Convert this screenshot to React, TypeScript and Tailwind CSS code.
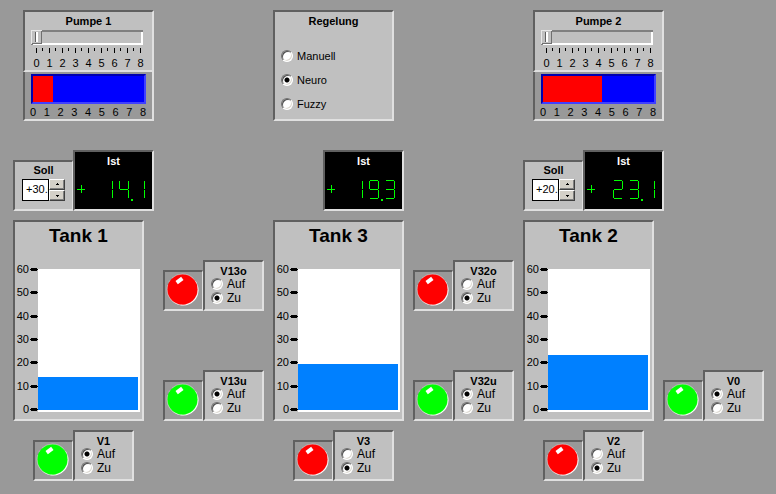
import type { ReactNode } from "react";

const BEVEL =
  "border-2 border-t-[#606060] border-l-[#606060] border-r-[#e0e0e0] border-b-[#e0e0e0]";

const SCALE = [0, 1, 2, 3, 4, 5, 6, 7, 8];
const LEVELS = [60, 50, 40, 30, 20, 10, 0];

function Title({ id, children }: { id?: string; children: ReactNode }) {
  return (
    <h2 id={id} className="text-center text-[11px] leading-[18px] font-bold">
      {children}
    </h2>
  );
}

function Pump({ name, flow }: { name: string; flow: number }) {
  const id = name.replace(" ", "-").toLowerCase();
  return (
    <section className="w-[131px]">
      <div className={`h-[62px] bg-[#c0c0c0] ${BEVEL}`}>
        <label htmlFor={id} className="block text-center text-[11px] leading-[18px] font-bold">
          {name}
        </label>
        <input
          id={id}
          type="range"
          min={0}
          max={8}
          step={0.1}
          defaultValue={0}
          className="ml-[6px] block h-[15px] w-[112px] appearance-none bg-[#c0c0c0] shadow-[inset_2px_2px_0_#808080,inset_-2px_-2px_0_#ffffff] [&::-webkit-slider-thumb]:h-[14px] [&::-webkit-slider-thumb]:w-[11px] [&::-webkit-slider-thumb]:-mt-px [&::-webkit-slider-thumb]:appearance-none [&::-webkit-slider-thumb]:bg-[#c0c0c0] [&::-webkit-slider-thumb]:bg-[linear-gradient(90deg,transparent_4px,#606060_4px,#606060_5px,#ffffff_5px,#ffffff_7px,transparent_7px)] [&::-webkit-slider-thumb]:bg-[size:11px_10px] [&::-webkit-slider-thumb]:bg-center [&::-webkit-slider-thumb]:bg-no-repeat [&::-webkit-slider-thumb]:shadow-[inset_1px_1px_0_#e8e8e8,inset_-1px_-1px_0_#707070]"
        />
        <svg className="mt-[3px] ml-[6px] block h-[6px] w-[112px]" shapeRendering="crispEdges" aria-hidden="true">
          {SCALE.map((n) => (
            <rect key={n} x={5 + n * 13} y={0} width={1} height={5} />
          ))}
          {SCALE.slice(0, 8).map((n) => (
            <rect key={n} x={11 + n * 13} y={0} width={1} height={3} />
          ))}
        </svg>
        <div className="mt-[3px] ml-[5px] flex w-[117px] text-center text-[11px] leading-[12px]">
          {SCALE.map((n) => (
            <span key={n} className="flex-1">{n}</span>
          ))}
        </div>
      </div>
      <div className="h-[49px] border-2 border-t-0 border-l-[#606060] border-r-[#e0e0e0] border-b-[#e0e0e0] pt-[2px]">
        <div className="ml-[6px] h-[30px] w-[115px] border-2 border-t-[#0000b0] border-l-[#0000b0] border-r-[#4040ff] border-b-[#4040ff] bg-[#0000ff]">
          <div className="h-full bg-[#ff0000]" style={{ width: `${(flow / 8) * 100}%` }} />
        </div>
        <div className="mt-[2px] ml-[2px] flex w-[122px] justify-between text-center text-[11px] leading-[12px]">
          {SCALE.map((n) => (
            <span key={n} className="w-[12px]">{n}</span>
          ))}
        </div>
      </div>
    </section>
  );
}

function Radio({ group, label, checked }: { group: string; label: string; checked: boolean }) {
  return (
    <label className="flex items-center gap-[4px]">
      <input
        type="radio"
        name={group}
        defaultChecked={checked}
        className="size-[12px] appearance-none rounded-full border border-t-[#707070] border-l-[#707070] border-r-white border-b-white bg-white shadow-[inset_1px_1px_0_#505050,inset_-1px_-1px_0_#dcd8d0] checked:bg-[radial-gradient(circle,#000_2px,#fff_3px)]"
      />
      {label}
    </label>
  );
}

function Control() {
  const modes = ["Manuell", "Neuro", "Fuzzy"];
  return (
    <section role="radiogroup" aria-labelledby="regelung" className={`h-[111px] w-[121px] bg-[#c0c0c0] ${BEVEL}`}>
      <Title id="regelung">Regelung</Title>
      <div className="mt-[14px] ml-[6px] flex flex-col text-[11px] leading-[24px]">
        {modes.map((m) => (
          <Radio key={m} group="mode" label={m} checked={m === "Neuro"} />
        ))}
      </div>
    </section>
  );
}

/* Lit segments per digit: a top, b/c right, d bottom, e/f left, g middle */
const SEGMENTS: Record<string, string> = {
  "0": "abcdef",
  "1": "bc",
  "2": "abged",
  "3": "abgcd",
  "4": "fgbc",
  "5": "afgcd",
  "6": "afgecd",
  "7": "abc",
  "8": "abcdefg",
  "9": "abcdfg",
};

const SEGMENT_BOX: Record<string, [number, number, number, number]> = {
  a: [1, 0, 8, 1],
  b: [9, 1, 1, 8],
  c: [9, 10, 1, 8],
  d: [1, 18, 8, 1],
  e: [0, 10, 1, 8],
  f: [0, 1, 1, 8],
  g: [1, 9, 8, 1],
};

function Actual({ value }: { value: string }) {
  const digits = value.replace(".", "").split("");
  return (
    <section className={`h-[61px] w-[81px] bg-black ${BEVEL}`}>
      <h2 className="text-center text-[11px] leading-[18px] font-bold text-white">Ist</h2>
      <svg
        className="mt-[10px] block h-[24px] w-full"
        viewBox="0 0 77 24"
        fill="#00ff00"
        shapeRendering="crispEdges"
        role="img"
        aria-label={`+${value}`}
      >
        <rect x={2} y={9} width={8} height={1} />
        <rect x={6} y={5} width={1} height={8} />
        {digits.map((d, i) => (
          <g key={i} transform={`translate(${28 + i * 16} 0)`}>
            {SEGMENTS[d].split("").map((s) => {
              const [x, y, w, h] = SEGMENT_BOX[s];
              return <rect key={s} x={x} y={y} width={w} height={h} />;
            })}
          </g>
        ))}
        <rect x={56} y={19} width={2} height={2} />
      </svg>
    </section>
  );
}

function Setpoint({ id, value }: { id: string; value: string }) {
  const button =
    "flex h-[11px] w-full items-center justify-center border border-t-white border-l-white border-r-[#404040] border-b-[#404040] bg-[#d4d0c8] shadow-[inset_-1px_-1px_0_#808080]";
  return (
    <section className="h-[51px] w-[60px] border-2 border-r border-t-[#606060] border-l-[#606060] border-r-[#e0e0e0] border-b-[#e0e0e0] bg-[#c0c0c0]">
      <label htmlFor={id} className="block text-center text-[11px] leading-[17px] font-bold">Soll</label>
      <div className="ml-[7px] flex">
        <input
          id={id}
          type="text"
          defaultValue={value}
          className="h-[22px] w-[27px] border border-black bg-white pb-[3px] pl-[3px] text-[11px] leading-[16px]"
        />
        <div className="w-[16px]">
          <button type="button" aria-label="Erhöhen" className={button}>
            <svg className="h-[3px] w-[5px]" viewBox="0 0 5 3" shapeRendering="crispEdges">
              <rect x={2} y={0} width={1} height={1} />
              <rect x={1} y={1} width={3} height={1} />
            </svg>
          </button>
          <button type="button" aria-label="Verringern" className={button}>
            <svg className="h-[3px] w-[5px]" viewBox="0 0 5 3" shapeRendering="crispEdges">
              <rect x={1} y={1} width={3} height={1} />
              <rect x={2} y={2} width={1} height={1} />
            </svg>
          </button>
        </div>
      </div>
    </section>
  );
}

function Tank({ name, level }: { name: string; level: number }) {
  return (
    <section className={`h-[201px] w-[131px] bg-[#c0c0c0] ${BEVEL}`}>
      <h2 className="text-center text-[19px] leading-[28px] font-bold">{name}</h2>
      <div className="mt-[13px] flex">
        <div className="flex h-[153px] w-[14px] flex-col justify-between text-right text-[11px] leading-[13px]">
          {LEVELS.map((n) => (
            <span key={n}>{n}</span>
          ))}
        </div>
        <svg className="ml-px h-[153px] w-[8px]" shapeRendering="crispEdges" aria-hidden="true">
          {LEVELS.map((n, i) => {
            const y = Math.round(6 + (i * 140) / 6);
            return (
              <g key={n}>
                <rect x={0} y={y} width={8} height={1} />
                <rect x={1} y={y - 1} width={6} height={3} />
              </g>
            );
          })}
        </svg>
        <div className="mt-[6px] flex h-[143px] w-[102px] flex-col justify-end border-r-2 border-b-2 border-white bg-white">
          <div className="bg-[#0080ff]" style={{ height: `${(level / 60) * 100}%` }} />
        </div>
      </div>
    </section>
  );
}

function Valve({ name, open }: { name: string; open: boolean }) {
  return (
    <section className="flex items-end">
      <div className="h-[41px] w-[40px] border-2 border-r border-t-[#606060] border-l-[#606060] border-r-[#e0e0e0] border-b-[#e0e0e0]">
        <svg className="h-[37px] w-[37px]" viewBox="0 0 37 37" aria-hidden="true">
          <circle cx={18.2} cy={18.2} r={15.3} fill="#fff" />
          <circle cx={17.5} cy={17.5} r={15.2} fill={open ? "#00ff00" : "#ff0000"} />
          <circle cx={17.5} cy={17.5} r={15.5} fill="none" stroke="#fff" strokeWidth={1} strokeDasharray="2 3 24 3" strokeDashoffset={8} opacity={0.35} />
          <rect x={-3.5} y={-2} width={7} height={4} fill="#fff" transform="translate(14.5 8.5) rotate(-36)" />
        </svg>
      </div>
      <div role="radiogroup" aria-labelledby={name} className={`h-[51px] w-[61px] bg-[#c0c0c0] ${BEVEL}`}>
        <h2 id={name} className="pt-[3px] text-center text-[11px] leading-[12px] font-bold">{name}</h2>
        <div className="ml-[6px] flex flex-col text-[12px] leading-[14px]">
          <Radio group={`valve-${name}`} label="Auf" checked={open} />
          <Radio group={`valve-${name}`} label="Zu" checked={!open} />
        </div>
      </div>
    </section>
  );
}

export default function App() {
  return (
    <main className="min-h-screen bg-[#999999] pt-[10px] pb-[13px] pl-[13px] font-['Liberation_Sans',Arial,sans-serif] text-black">
      <div className="grid grid-cols-[150px_110px_140px_110px_140px_auto] items-start">
        <div className="col-span-2 mb-[29px] ml-[10px]">
          <Pump name="Pumpe 1" flow={1.44} />
        </div>
        <div className="col-span-2">
          <Control />
        </div>
        <div className="col-span-2 ml-[10px]">
          <Pump name="Pumpe 2" flow={4.25} />
        </div>

        <div className="col-span-2 mb-[9px] flex items-end">
          <Setpoint id="soll-1" value="+30.0" />
          <Actual value="14.1" />
        </div>
        <div className="col-span-2 ml-[50px]">
          <Actual value="19.3" />
        </div>
        <div className="col-span-2 flex items-end">
          <Setpoint id="soll-2" value="+20.0" />
          <Actual value="23.1" />
        </div>

        <Tank name="Tank 1" level={14.1} />
        <div className="mt-[40px] flex flex-col gap-[59px]">
          <Valve name="V13o" open={false} />
          <Valve name="V13u" open />
        </div>
        <Tank name="Tank 3" level={19.6} />
        <div className="mt-[40px] flex flex-col gap-[59px]">
          <Valve name="V32o" open={false} />
          <Valve name="V32u" open />
        </div>
        <Tank name="Tank 2" level={23.4} />
        <div className="self-end">
          <Valve name="V0" open />
        </div>

        <div className="col-span-2 mt-[9px] ml-[20px]">
          <Valve name="V1" open />
        </div>
        <div className="col-span-2 mt-[9px] ml-[20px]">
          <Valve name="V3" open={false} />
        </div>
        <div className="col-span-2 mt-[9px] ml-[20px]">
          <Valve name="V2" open={false} />
        </div>
      </div>
    </main>
  );
}
